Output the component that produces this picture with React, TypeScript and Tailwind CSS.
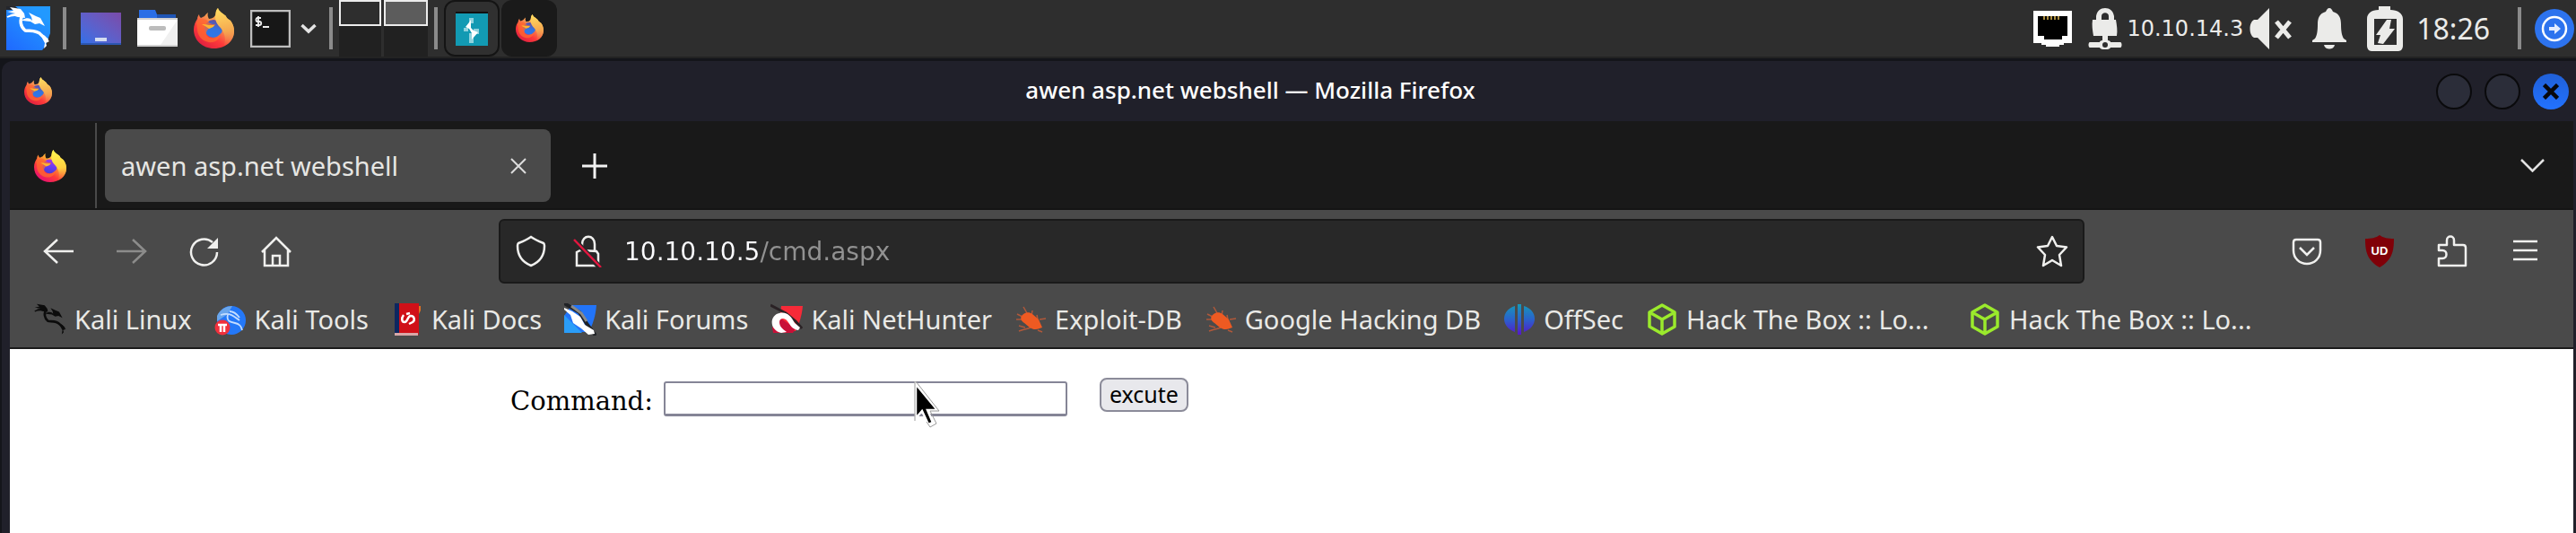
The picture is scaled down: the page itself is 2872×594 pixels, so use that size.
import React, { useId, useState } from "react";

function FirefoxLogo({ className, vivid = false }: { className: string; vivid?: boolean }) {
  const id = useId();
  const globe = vivid ? "#6a3df0" : "#3373e0";
  return (
    <svg viewBox="0 0 45 45" className={className} aria-hidden="true">
      <defs>
        <linearGradient id={id + "a"} x1="0.85" y1="0.1" x2="0.25" y2="0.95">
          <stop offset="0" stopColor={vivid ? "#fff44f" : "#ffd35a"} />
          <stop offset="0.4" stopColor={vivid ? "#ffa030" : "#f5914f"} />
          <stop offset="0.7" stopColor="#ff3a3a" />
          <stop offset="1" stopColor={vivid ? "#e8106f" : "#e0213f"} />
        </linearGradient>
        <linearGradient id={id + "b"} x1="0.5" y1="0" x2="0.6" y2="1">
          <stop offset="0" stopColor={vivid ? "#fff44f" : "#ffdc60"} />
          <stop offset="0.6" stopColor={vivid ? "#ffd040" : "#f5a850"} />
          <stop offset="1" stopColor="#f57a4a" stopOpacity="0" />
        </linearGradient>
        <linearGradient id={id + "c"} x1="0.7" y1="0" x2="0.4" y2="1">
          <stop offset="0" stopColor={vivid ? "#b833e1" : "#6b4a9a"} />
          <stop offset="0.5" stopColor={globe} />
          <stop offset="1" stopColor={vivid ? "#4a3ad8" : "#2f78e8"} />
        </linearGradient>
      </defs>
      <path
        d="M27 0c1 4 6 6 9 9 0 1 1 2 2 3l3 2c3 4 4 8 4 12 0 11-10 19-22.500 19S0 36 0 24c0-5 2-9 4-12 0-2 1-4 2-5 0 2 1 3 2 4l4-2c1-1 2-3 4-4-1 3 0 5 1 7 5-1 5-1 7-4 1-3 0-5 3-8z"
        fill={`url(#${id}a)`}
      />
      <circle cx="22" cy="23" r="10" fill={`url(#${id}c)`} />
      <path
        d="M27 0c1 4 6 6 9 9 0 1 1 2 2 3l3 2c3 4 4 8 4 12 0 8-5 14-12 17 3-6 2-12 0-16-2-6-9-8-9-17 1-4 0-6 3-10z"
        fill={`url(#${id}b)`}
      />
      <path
        d="M3 16c2-3 6-5 11-3l4 4c2 1 4 1 6 1-1 3-5 3-6 4-3 2-4 4-4 6 0 4 4 6 8 5 4 0 6-3 8-5-1 8-7 11-13 10C9 37 4 30 4 24z"
        fill="#ff6a30"
        fillOpacity="0.75"
      />
      <path d="M9 18c3 0 5 0 8 1h6c-1 3-4 3-6 4-2-2-5-3-8-5z" fill="#ffb52e" />
    </svg>
  );
}

function DragonShape() {
  return (
    <g>
      <path d="M4 1l12 2 4 5 1 5-8-1-9-3 6-1-9-2 7-1z" fill="currentColor" />
      <path d="M1 12c6-3 11-2 17-1" fill="none" stroke="currentColor" strokeWidth="1.800" />
      <path
        d="M19 9c-5 6-3 14 2 18 5 1 13-1 18 5l7 6"
        fill="none"
        stroke="currentColor"
        strokeWidth="3.500"
        strokeLinejoin="round"
      />
      <path d="M18 15c5-3 9-2 11 1l-1-4-3-5 8 4 5 2 5 9-6-3-5 1-5-3-9-1z" fill="currentColor" />
      <path d="M37 30c3 2 7 2 8 6l3 3-4 2 1 3-3 3 1-6z" fill="currentColor" />
    </g>
  );
}

function KaliMenuIcon() {
  return (
    <svg viewBox="0 0 49 49" className="size-[49px] text-white">
      <defs>
        <linearGradient id="kali-menu" x1="0" y1="1" x2="0.7" y2="0.1">
          <stop offset="0" stopColor="#1f68ff" />
          <stop offset="1" stopColor="#2299ff" />
        </linearGradient>
      </defs>
      <path d="M0 0h49v30l-3 8-2 6-4 5H0z" fill="url(#kali-menu)" />
      <path d="M0 0h10l5 4H0z" fill="#24262c" />
      <DragonShape />
    </svg>
  );
}

function Separator({ className = "" }: { className?: string }) {
  return <span className={"h-[47px] w-1 shrink-0 bg-[#8b8b8b] " + className} />;
}

function Taskbar() {
  return (
    <header className="flex h-[65px] items-center justify-between border-b-2 border-[#232323] bg-[#2e2e2e] pl-[7px] pr-0.5">
      <div className="flex h-full items-center">
        <button aria-label="Applications menu"><KaliMenuIcon /></button>
        <Separator className="mx-[14px]" />
        <div className="flex items-center gap-[18px] pl-0.5">
          <button aria-label="Show desktop" className="flex h-9 w-[45px] items-end justify-center border-b-2 border-[#2c56b0] bg-linear-to-tr from-[#2e70e8] to-[#7a4aa8] pb-0.5">
            <span className="h-1 w-[13px] bg-[#d4dcf0]" />
          </button>
          <button aria-label="File manager">
            <svg viewBox="0 0 45 41" className="h-[41px] w-[45px]">
              <path d="M2 0h18l2 5h21v6H2z" fill="#2a6ee6" />
              <path d="M22 5h21v4H22z" fill="#1f55b5" />
              <path d="M0 9h45v32H0z" fill="#fff" />
              <path d="M45 11v28H26z" fill="#f0f0f0" />
              <path d="M0 9h45v2H0zM0 39h45v2H0z" fill="#d2d2d2" />
              <rect x="13" y="18" width="19" height="5" rx="2" fill="#bcbcbc" />
            </svg>
          </button>
          <button aria-label="Firefox"><FirefoxLogo className="size-[45px]" /></button>
          <button aria-label="Terminal">
            <svg viewBox="0 0 45 42" className="h-[42px] w-[45px]">
              <rect x="1" y="1" width="43" height="40" fill="#171717" stroke="#bdbdbd" strokeWidth="2.500" />
              <path d="M12 9H8c-2 0-2 4 0 4h2c3 0 3 4 0 4H6M9 7v12" fill="none" stroke="#eee" strokeWidth="1.800" />
              <path d="M14 19h7" stroke="#eee" strokeWidth="2" />
            </svg>
          </button>
        </div>
        <button aria-label="More terminals" className="ml-[11px]">
          <svg viewBox="0 0 18 12" className="h-3 w-[18px]"><path d="M1.500 2l7.500 7 7.500-7" fill="none" stroke="#e4e4e4" strokeWidth="3.500" /></svg>
        </button>
        <Separator className="ml-[14px] mr-[7px]" />
        <div className="flex h-full gap-[3px]">
          <button aria-label="Workspace 1" className="h-full w-[47px] bg-[#212121]">
            <span className="block h-[29px] w-full border-2 border-[#ececec] bg-[#2e2e2e]" />
            <span className="block h-[34px]" />
          </button>
          <button aria-label="Workspace 2" className="h-full w-[49px] bg-[#212121]">
            <span className="block h-[29px] w-full border-2 border-[#ececec] bg-[#5c5c5c]" />
            <span className="block h-[34px]" />
          </button>
        </div>
        <Separator className="ml-[7px] mr-[7px]" />
        <button aria-label="Burp Suite" className="flex h-[63px] w-[62px] items-center justify-center rounded-xl border-2 border-[#141414] bg-[#303030]">
          <svg viewBox="0 0 36 38" className="h-[38px] w-9">
            <path d="M0 0h36v38H0z" fill="#111" />
            <path d="M0 2h36v36H0z" fill="#129ab3" />
            <path d="M15 7h5v6h-5zM15 24h5v11h-5zM20 19h6v6h-6zM9 18h5v4H9z" fill="#8fd2dd" />
            <path d="M17 9v9l3 3 5 2-7 8v-7l-3-5-4-2 4-5z" fill="#fff" />
          </svg>
        </button>
        <button aria-label="Firefox window" className="ml-0.5 flex h-[63px] w-[62px] items-center justify-center rounded-xl bg-[#1a1a1a]">
          <FirefoxLogo className="size-[31px]" />
        </button>
      </div>

      <div className="flex items-center text-[#ebebe9]">
        <svg viewBox="0 0 45 40" className="h-10 w-[45px]">
          <path d="M1 0h43v36h-9v2h-5v2H15v-2h-5v-2H1z" fill="#fff" />
          <path d="M6 6h33v22h-6v4H13v-4H6z" fill="#000" />
          <path d="M13 6v4M17 6v4M21 6v4M25 6v4M29 6v4" stroke="#a88a3c" strokeWidth="2" />
        </svg>
        <svg viewBox="0 0 38 46" className="ml-[17px] h-[46px] w-[38px]" fill="currentColor">
          <path fillRule="evenodd" d="M5 13h4v-4C10 3 14 0 19 0s9 3 10 9v4h2c1 6 2 12 1 18H6C5 25 4 19 5 13zm10 0h8V9c0-5-8-5-8 0z" />
          <path fillRule="evenodd" d="M16 31h6v5c2 0 3 1 3 2h11c2 0 2 6 0 6H25c-1 3-11 3-12 0H2c-2 0-2-6 0-6h11c0-1 1-2 3-2zm3 7a3 3 0 100 6 3 3 0 000-6z" />
        </svg>
        <span className="ml-[5px] font-['DejaVu_Sans',sans-serif] text-[24px] leading-8">10.10.14.3</span>
        <svg viewBox="0 0 50 46" className="ml-[7px] h-[46px] w-[50px]" fill="currentColor">
          <path d="M22 0v46L9 33H5c-6-3-6-17 0-20h4z" />
          <path d="M30 15l15 18M45 15L30 33" stroke="currentColor" strokeWidth="5" />
        </svg>
        <svg viewBox="0 0 38 46" className="ml-5 h-[46px] w-[38px]" fill="currentColor">
          <path d="M19 0c2 0 3 2 4 4 7 2 9 7 9 14 0 8 1 13 3 16l3 2v2H0v-2l3-2c2-3 3-8 3-16C6 11 8 6 15 4c1-2 2-4 4-4z" />
          <path d="M13 41h12c-1 6-11 6-12 0z" />
        </svg>
        <svg viewBox="0 0 40 50" className="ml-[23px] h-[50px] w-10" fill="currentColor">
          <path fillRule="evenodd" d="M13 0h13v4c8 0 14 4 14 10v30c0 3-2 6-5 6H5c-3 0-5-3-5-6V14C0 8 5 4 13 4zM8 14v29h25V14z" />
          <path d="M22 15h5l-2 10h6L18 42l-6-1 3-9h-5z" />
        </svg>
        <time className="ml-[15px] font-['Noto_Sans',sans-serif] text-[32px] leading-10">18:26</time>
        <Separator className="ml-[31px] mr-[15px]" />
        <button aria-label="Log out">
          <svg viewBox="0 0 44 44" className="size-11">
            <circle cx="22" cy="22" r="22" fill="#2d73ee" />
            <circle cx="22" cy="22" r="13" fill="none" stroke="#fff" strokeWidth="2.500" />
            <path d="M16 20h6v-4l7 6-7 6v-4h-6z" fill="#e4edff" />
          </svg>
        </button>
      </div>
    </header>
  );
}

function TitleBar() {
  return (
    <div className="flex h-[67px] shrink-0 items-center pl-[25px] pr-[5px]">
      <FirefoxLogo className="size-[31px]" />
      <h1 className="ml-[14px] flex-1 pb-[3px] text-center font-['Noto_Sans',sans-serif] text-[26px] font-medium leading-9 text-white">
        awen asp.net webshell — Mozilla Firefox
      </h1>
      <div className="flex gap-[14px]">
        <button aria-label="Minimize" className="size-10 rounded-full border-2 border-[#0a0a0c] bg-[#2b2d39]" />
        <button aria-label="Maximize" className="size-10 rounded-full border-2 border-[#0a0a0c] bg-[#2b2d39]" />
        <button aria-label="Close window" className="flex size-10 items-center justify-center rounded-full bg-linear-to-b from-[#2060d8] to-[#2272ff]">
          <svg viewBox="0 0 18 18" className="size-[18px]"><path d="M1.500 1.500l15 15M16.500 1.500l-15 15" stroke="#08080c" strokeWidth="4.500" /></svg>
        </button>
      </div>
    </div>
  );
}

function TabStrip() {
  return (
    <div className="flex h-[99px] items-center border-b-2 border-[#141414] bg-[#191919] pt-0.5 text-[#fbfbfe]">
      <button aria-label="Firefox View" className="flex h-full w-[97px] items-center border-r-2 border-[#4a4a4a] pl-[27px]">
        <FirefoxLogo className="size-9" vivid />
      </button>
      <div className="ml-[9px] flex h-[81px] w-[497px] items-center justify-between rounded-lg bg-[#4a4a4a] pl-[18px] pr-[27px]">
        <span className="font-['Noto_Sans',sans-serif] text-[29px] leading-10 text-[#e6e6e3]">awen asp.net webshell</span>
        <button aria-label="Close tab">
          <svg viewBox="0 0 18 18" className="size-[18px]"><path d="M1 1l16 16M17 1L1 17" stroke="#dcdcdc" strokeWidth="2" /></svg>
        </button>
      </div>
      <button aria-label="New tab" className="ml-[35px]">
        <svg viewBox="0 0 28 28" className="size-7"><path d="M14 0v28M0 14h28" stroke="#f2f2f2" strokeWidth="3" /></svg>
      </button>
      <button aria-label="List all tabs" className="ml-auto mr-8">
        <svg viewBox="0 0 27 15" className="h-[15px] w-[27px]"><path d="M1 1l12.500 12.500L26 1" fill="none" stroke="#e2e2e2" strokeWidth="2.500" /></svg>
      </button>
    </div>
  );
}

function NavBar() {
  const [url, setUrl] = useState("10.10.10.5/cmd.aspx");
  const line = { fill: "none", stroke: "#f0f0ee", strokeWidth: 2.5 } as const;
  return (
    <div className="flex h-[90px] items-center pl-[37px] pr-9 pt-0.5">
      <div className="flex items-center gap-[45px]">
        <button aria-label="Back">
          <svg viewBox="0 0 36 36" className="size-9" {...line}><path d="M34 18H3M16 5L2 18l14 13" /></svg>
        </button>
        <button aria-label="Forward" className="opacity-40">
          <svg viewBox="0 0 36 36" className="size-9" {...line}><path d="M1 18h31M19 5l14 13-14 13" /></svg>
        </button>
        <button aria-label="Reload">
          <svg viewBox="0 0 36 36" className="size-9" {...line}>
            <path d="M32 19a14.500 14.500 0 11-5-11" /><path d="M33 3v12H21z" fill="#f0f0ee" stroke="none" />
          </svg>
        </button>
        <button aria-label="Home">
          <svg viewBox="0 0 36 36" className="size-9" {...line}>
            <path d="M1 19L17 3l16 16M4 16v18h26V16M13 34V23h8v11" />
          </svg>
        </button>
      </div>
      <div className="ml-[229px] flex h-[72px] flex-1 items-center rounded-md border-2 border-[#1a1a1a] bg-[#282828] px-4">
        <button aria-label="Tracking protection">
          <svg viewBox="0 0 36 36" className="size-9" {...line}>
            <path d="M18 2c4 3 9 5 14 7 1 1 1 2 1 3 0 11-5 18-15 22C8 30 3 23 3 12c0-1 0-2 1-3 5-2 10-4 14-7z" />
          </svg>
        </button>
        <button aria-label="Connection not secure" className="ml-7">
          <svg viewBox="0 0 36 36" className="size-9" {...line}>
            <path d="M11 18V10c0-11 14-11 14 0v8M5 19l4-2h2l16 1 2 3v13H5z" />
            <path d="M2 5l29 31" stroke="#282828" strokeWidth="6" /><path d="M2 5l30 31" stroke="#e3163f" />
          </svg>
        </button>
        <input
          aria-label="Address"
          value={url}
          onChange={(e) => setUrl(e.target.value)}
          className="ml-[22px] h-12 min-w-0 flex-1 bg-[linear-gradient(90deg,#fbfbfe_151px,#929292_151px)] bg-clip-text font-['DejaVu_Sans',sans-serif] text-[28px] text-transparent caret-white outline-none"
        />
        <button aria-label="Bookmark this page">
          <svg viewBox="0 0 36 36" className="size-9" {...line}>
            <path strokeLinejoin="round" d="M18 2l5 10 11 1.500-8 8.500 2 12-10-6-10 6 2-12-8-8.500L13 12z" />
          </svg>
        </button>
      </div>
      <div className="ml-[230px] flex items-center gap-[45px]">
        <button aria-label="Save to Pocket">
          <svg viewBox="0 0 36 36" className="size-9" {...line}>
            <path d="M6 5h24c2 0 3 1 3 3v9c0 9-7 15-15 15S3 26 3 17V8c0-2 1-3 3-3z" /><path d="M10 14l8 8 8-8" />
          </svg>
        </button>
        <button aria-label="uBlock Origin">
          <svg viewBox="0 0 36 36" className="size-9">
            <path d="M18 0c4 3 9 4 16 4 0 14-2 24-16 32C4 28 2 18 2 4c7 0 12-1 16-4z" fill="#800008" />
            <text x="18" y="22" textAnchor="middle" fill="#fff" fontSize="13" fontWeight="700" fontFamily="Liberation Sans, sans-serif">UD</text>
          </svg>
        </button>
        <button aria-label="Extensions">
          <svg viewBox="0 0 36 36" className="size-9" {...line}>
            <path strokeLinejoin="round" d="M3 34V26h4c6 0 6-9 0-9H3v-6h9V6c0-6 8-6 8 0v5h10c2 0 3 1 3 3v20z" />
          </svg>
        </button>
        <button aria-label="Application menu">
          <svg viewBox="0 0 36 36" className="size-9" {...line}><path d="M5 7h27M5 17h27M5 27h27" /></svg>
        </button>
      </div>
    </div>
  );
}

const Bug = () => (
  <svg viewBox="0 0 36 36" className="size-9">
    <path d="M10 4l4 7M3 12l6 3M2 18l8 0M5 31c5-2 9-2 13-4M20 8l-1 6M25 13l1 5M28 18l7-1M12 27l-7-2M26 30l5 2" stroke="#b0583a" strokeWidth="1.500" fill="none" />
    <path d="M8 14c3-4 8-5 12-2l7 6 4 9-3 1c-4 2-8 1-11-1l-6-5c-3-2-5-5-3-8z" fill="#ee5a22" />
  </svg>
);

const Cube = () => (
  <svg viewBox="0 0 36 36" className="size-9" fill="none" stroke="#9bea2c" strokeWidth="3.500" strokeLinejoin="round">
    <path d="M18 2l14 8v16l-14 8-14-8V10zM4 10l14 8 14-8M18 18v16" />
  </svg>
);

const ToolsIcon = () => (
  <svg viewBox="0 0 36 36" className="size-9">
    <circle cx="19" cy="19" r="16" fill="#2478f8" />
    <path d="M3 14C6 7 13 3 20 3l-5 9-12 8z" fill="#6aa6ec" />
    <path d="M7 13c9-3 13 0 21 6M15 13c-2 7 3 8 8 9s7 3 8 8M17 9c5 0 8 3 11 7" fill="none" stroke="#c4ddff" strokeWidth="1.800" />
    <circle cx="9" cy="27" r="8.500" fill="#f0303c" />
    <path d="M4 24h10M7 24v8M11 24v8" stroke="#fff" strokeWidth="2.500" />
  </svg>
);

const DocsIcon = () => (
  <svg viewBox="0 0 36 36" className="size-9">
    <path d="M4 0h27v34l-1 2H4z" fill="#d01018" />
    <path d="M4 0h5v34H4z" fill="#0d2660" />
    <path d="M31 3h2v5l-2 4z" fill="#e07020" />
    <path d="M4 33h26v3H4z" fill="#d8a8a8" />
    <path d="M14 13c-3 4-2 8 1 8 4 0 3-7 7-7s5 5 2 7l-4 2M17 12l4-1" fill="none" stroke="#fff" strokeWidth="2.500" />
  </svg>
);

const ForumsIcon = () => (
  <svg viewBox="0 0 36 36" className="size-9">
    <path d="M8 2h28c-1 12-4 22-9 30H0V14z" fill="#2274f8" />
    <path d="M0 13l20 20H0z" fill="#2a9df8" />
    <path d="M0 0l17 10 9 14 9 12" stroke="#202226" strokeWidth="4" fill="none" />
    <path d="M0 5l9 4 9 6 5 9 10 6 1 4-7 1-8-7-9-6-3-9-7-6z" fill="#fff" />
    <path d="M8 3l11 8 6 9" stroke="#8a8a88" strokeWidth="3" fill="none" />
  </svg>
);

const NetHunterIcon = () => (
  <svg viewBox="0 0 36 36" className="size-9">
    <path d="M12 3h24c-1 11-4 20-8 28L8 32z" fill="#f62a38" />
    <path d="M2 27l8-11 18 12-3 5H3z" fill="#c81038" />
    <path d="M0 2l17 9 11 9 7 8" stroke="#2a2225" strokeWidth="3" fill="none" />
    <path d="M12 33C-2 30-1 13 10 11c9-2 13 4 17 11l6 5-2 3c-7-1-9-6-12-10-4-5-9-3-9 1 0 5 4 8 8 11z" fill="#fff" />
  </svg>
);

function OffSecIcon() {
  return (
    <svg viewBox="0 0 36 36" className="size-9">
      <defs>
        <linearGradient id="offsec" x1="0" y1="0" x2="0" y2="1">
          <stop offset="0" stopColor="#1698b8" /><stop offset="0.5" stopColor="#2a62cc" /><stop offset="1" stopColor="#5518c8" />
        </linearGradient>
      </defs>
      <path d="M13 3v29C-3 26-3 8 13 3zM23 3v29c16-6 16-24 0-29zM16 1h4v34h-4z" fill="url(#offsec)" />
    </svg>
  );
}

const bookmarks = [
  { label: "Kali Linux", icon: <svg viewBox="0 0 49 49" className="size-9 text-[#0c0c0c]"><DragonShape /></svg> },
  { label: "Kali Tools", icon: <ToolsIcon /> },
  { label: "Kali Docs", icon: <DocsIcon /> },
  { label: "Kali Forums", icon: <ForumsIcon /> },
  { label: "Kali NetHunter", icon: <NetHunterIcon /> },
  { label: "Exploit-DB", icon: <Bug /> },
  { label: "Google Hacking DB", icon: <Bug /> },
  { label: "OffSec", icon: <OffSecIcon /> },
  { label: "Hack The Box :: Lo...", icon: <Cube />, wide: true },
  { label: "Hack The Box :: Lo...", icon: <Cube />, wide: true },
];

function BookmarksBar() {
  return (
    <nav aria-label="Bookmarks" className="flex h-[65px] items-start gap-[25px] border-b-2 border-[#1a1a1a] pl-[27px] pt-3">
      {bookmarks.map((b, i) => (
        <a
          key={i}
          href="#"
          className={
            "flex items-center gap-[9px] whitespace-nowrap font-['Noto_Sans',sans-serif] text-[29px] leading-10 text-[#e9e9e6] " +
            (b.wide ? "min-w-[335px]" : "")
          }
        >
          {b.icon}
          {b.label}
        </a>
      ))}
    </nav>
  );
}

function CommandForm() {
  const [command, setCommand] = useState("");
  return (
    <form onSubmit={(e) => e.preventDefault()} className="flex items-start pl-[558px] pt-8">
      <label htmlFor="command" className="pt-2 font-['DejaVu_Serif',serif] text-[29px] leading-9 text-black">Command:</label>
      <div className="relative ml-3 mt-1">
        <input
          id="command"
          value={command}
          onChange={(e) => setCommand(e.target.value)}
          className="block h-[39px] w-[450px] rounded-[3px] border-2 border-b-3 border-[#858596] bg-white px-1 text-[24px] text-black"
        />
        <svg viewBox="0 0 30 52" className="pointer-events-none absolute left-[279px] top-0 h-[52px] w-[30px]">
          <path d="M2 3v38l7-8 7 15 5-2-6-14h11z" fill="#000" stroke="#fff" strokeWidth="2.500" />
          <path d="M1 0v44M2 0l26 33H18l7 14-7 4-4-6" fill="none" stroke="#9a9a9a" strokeWidth="1" />
        </svg>
      </div>
      <button className="ml-9 h-[38px] rounded-lg border-2 border-[#8b8b99] bg-[#e8e8ec] px-[9px] pb-0.5 font-['Noto_Sans',sans-serif] text-[25px] leading-8 text-black">
        excute
      </button>
    </form>
  );
}

export default function App() {
  return (
    <div className="flex min-h-screen flex-col bg-[#14151a]">
      <Taskbar />
      <section className="ml-0.5 mt-[3px] flex flex-1 flex-col rounded-tl-xl bg-[#20202a] pr-[3px]">
        <TitleBar />
        <div className="ml-[9px] flex flex-1 flex-col bg-[#4a4a4a]">
          <TabStrip />
          <NavBar />
          <BookmarksBar />
          <main className="flex-1 bg-white">
            <CommandForm />
          </main>
        </div>
      </section>
    </div>
  );
}
